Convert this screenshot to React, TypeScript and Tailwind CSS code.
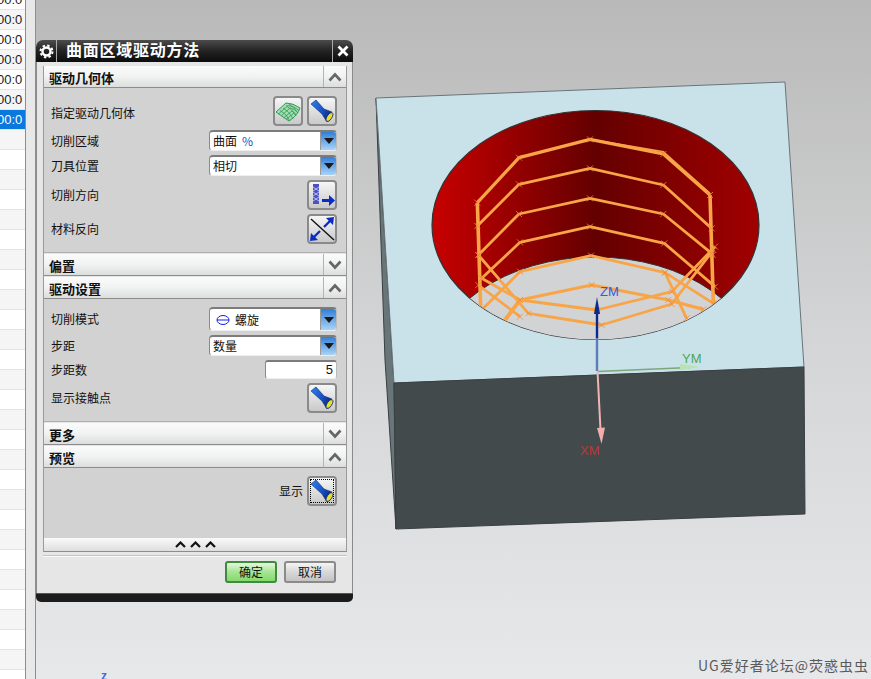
const cjk = "font-['Noto_Sans_CJK_SC','Liberation_Sans',sans-serif]";

const rows = Array.from({ length: 34 }, (_, i) => i);

const toolPaths = [
    [[172, 308], [297, 173], [510, 118], [730, 162], [870, 285]],
    [[172, 378], [297, 253], [510, 205], [730, 255], [875, 385]],
    [[175, 465], [297, 342], [510, 295], [730, 342], [875, 460], [878, 465]],
    [[185, 535], [300, 427], [510, 380], [733, 430], [885, 560]],
    [[190, 625], [300, 515], [513, 467], [735, 518], [880, 610]],
    [[175, 465], [325, 640], [545, 675], [755, 612], [880, 450]],
    [[185, 535], [300, 600], [530, 630], [755, 575], [885, 440]],
    [[300, 600], [515, 555], [745, 600], [850, 628]],
    [[735, 518], [800, 655]],
    [[175, 555], [300, 650]],
];

// zoomed crop coords -> page coords
const pt = ([x, y]: number[]) => [420 + x / 3, 100 + y / 3];
const toPoints = (line: number[][]) => line.map((p) => pt(p).join(',')).join(' ');

function Flashlight() {
    return (
        <svg width="26" height="26" viewBox="0 0 26 26">
            <defs>
                <linearGradient id="torch" x1="0" y1="0" x2="1" y2="0.6">
                    <stop offset="0" stopColor="#2f82ee" />
                    <stop offset="0.55" stopColor="#1a56c8" />
                    <stop offset="1" stopColor="#0a2a86" />
                </linearGradient>
            </defs>
            <path d="M2 6 L7 2 L15 11 L23 14 L18 24 L13 16 Z" fill="url(#torch)" stroke="#0c2a7c" strokeWidth="0.6" />
            <ellipse cx="20.5" cy="19" rx="5" ry="2.4" transform="rotate(-58 20.5 19)" fill="#e8dd2c" stroke="#0c2a7c" strokeWidth="0.8" />
        </svg>
    );
}

function SurfaceIcon() {
    return (
        <svg width="26" height="24" viewBox="0 0 26 24">
            <path d="M1 13 L11 4 Q18 4 25 9 Q23 16 14 22 Z" fill="#a6dcb0" stroke="#2e9a58" strokeWidth="1" />
            <path d="M3.5 15 L13 6.5 Q19 7 24 11.5 M6 17 L15 9 Q20 10 23 14 M8.5 19 L17 12 Q20 13 21 16.5 M11 20.5 L19 14 M5 11.5 Q11 14 15 22 M8 9 Q14 12 18 19.5 M11 6.5 Q17 10 21 17 M14 5 Q19 8 23 14" fill="none" stroke="#2e9a58" strokeWidth="0.8" />
        </svg>
    );
}

function CutDirIcon() {
    return (
        <svg width="26" height="26" viewBox="0 0 26 26">
            <rect x="4" y="2" width="6" height="20" fill="#4a52c0" />
            <path d="M4 5 L10 9 M10 5 L4 9 M4 10 L10 14 M10 10 L4 14 M4 15 L10 19 M10 15 L4 19" stroke="#b8bcec" strokeWidth="1" />
            <path d="M13 17 H20 V13 L26 18.5 L20 24 V20 H13 Z" fill="#0a2cc4" />
        </svg>
    );
}

function FlipIcon() {
    return (
        <svg width="26" height="26" viewBox="0 0 26 26">
            <path d="M2 3 L25 24" stroke="#111" strokeWidth="1.4" />
            <path d="M15 11 L22 4 M11 15 L4 22" stroke="#0a2cc4" strokeWidth="2.4" />
            <path d="M25 1 L24 9 L17 2 Z M1 25 L2 17 L9 24 Z" fill="#0a2cc4" />
        </svg>
    );
}

function Gear() {
    return (
        <svg width="15" height="15" viewBox="0 0 15 15">
            <circle cx="7.5" cy="7.5" r="4" fill="none" stroke="#fff" strokeWidth="2.4" />
            <circle cx="7.5" cy="7.5" r="6" fill="none" stroke="#fff" strokeWidth="2" strokeDasharray="2.4 2.31" />
        </svg>
    );
}

function Chevron({ up }: { up: boolean }) {
    return (
        <svg width="14" height="10" viewBox="0 0 14 10">
            <path d={up ? 'M1.5 8.5 L7 2.5 L12.5 8.5' : 'M1.5 1.5 L7 7.5 L12.5 1.5'} fill="none" stroke="#666" strokeWidth="2.6" />
        </svg>
    );
}

function SectionHeader({ title, up }: { title: string; up: boolean }) {
    return (
        <div className="flex h-[22px] items-stretch border-b border-[#8c8c8c] bg-gradient-to-b from-[#fbfbfb] via-[#f1f2f2] to-[#dcdddd]">
            <span className="flex-1 pl-[5px] text-[13px] font-bold leading-[23px] text-[#111]">{title}</span>
            <span className="flex w-[23px] items-center justify-center border-l border-[#b4b4b4]">
                <Chevron up={up} />
            </span>
        </div>
    );
}

function IconButton({ children, focused }: { children: React.ReactNode; focused?: boolean }) {
    return (
        <div className="relative flex h-[30px] w-[30px] items-center justify-center rounded-[4px] border-2 border-[#8a8a8a] bg-gradient-to-b from-[#f6f6f6] to-[#c9c9c9]">
            {children}
            {focused && <span className="absolute inset-[1px] border border-dotted border-black" />}
        </div>
    );
}

function Dropdown({ children, h }: { children: React.ReactNode; h: string }) {
    return (
        <div className={`flex w-[128px] overflow-hidden rounded-[4px] border-t-2 border-l border-r border-b border-t-[#7c7c7c] border-l-[#8a8a8a] border-r-[#bbb] border-b-[#eee] bg-white ${h}`}>
            <span className="flex flex-1 items-center gap-[5px] pl-[3px] text-[12px] text-[#111]">{children}</span>
            <span className="flex w-[16px] items-center justify-center border-l border-[#9a9a9a] bg-gradient-to-b from-[#2f7fd8] to-[#a9d3f5]">
                <span className="h-0 w-0 border-x-[5px] border-t-[6px] border-x-transparent border-t-[#1a1a1a]" />
            </span>
        </div>
    );
}

function Row({ label, className, labelClass = '', children }: { label: string; className: string; labelClass?: string; children: React.ReactNode }) {
    return (
        <div className={`flex items-center justify-between pl-[7px] pr-[9px] ${className}`}>
            <span className={`text-[12px] text-[#111] ${labelClass}`}>{label}</span>
            {children}
        </div>
    );
}

function Dialog() {
    return (
        <div className={`absolute left-0 top-[40px] w-[317px] ${cjk}`}>
            <div className="flex h-[22px] items-stretch rounded-t-[7px] bg-gradient-to-b from-[#4c4c4c] via-[#232323] to-[#0c0c0c] text-white">
                <span className="flex w-[21px] items-center justify-center border-r border-[#aaa]">
                    <Gear />
                </span>
                <span className="flex-1 pl-[9px] text-[16px] font-bold leading-[18px] tracking-[0.75px]">曲面区域驱动方法</span>
                <span className="flex w-[21px] items-center justify-center border-l border-[#aaa]">
                    <svg width="12" height="12" viewBox="0 0 12 12">
                        <path d="M1.5 1.5 L10.5 10.5 M10.5 1.5 L1.5 10.5" stroke="#fff" strokeWidth="2.8" />
                    </svg>
                </span>
            </div>
            <div className="border-x border-[#8a8a8a] bg-[#e6e6e6] pl-[6px] pr-[5px] pt-[4px]">
                <div className="flex flex-col border-x border-[#9a9a9a]">
                    <SectionHeader title="驱动几何体" up />
                    <div className="flex h-[165px] flex-col border-b border-[#b0b0b0] bg-[#d2d2d2] pt-[8px]">
                        <Row label="指定驱动几何体" className="h-[30px]" labelClass="mt-[4px]">
                            <div className="flex gap-[4px]">
                                <IconButton><SurfaceIcon /></IconButton>
                                <IconButton><Flashlight /></IconButton>
                            </div>
                        </Row>
                        <Row label="切削区域" className="mt-[4px] h-[21px]">
                            <Dropdown h="h-[21px]">曲面 <span className="text-[#1b4fb4]">%</span></Dropdown>
                        </Row>
                        <Row label="刀具位置" className="mt-[4px] h-[21px]">
                            <Dropdown h="h-[21px]">相切</Dropdown>
                        </Row>
                        <Row label="切削方向" className="mt-[4px] h-[30px]">
                            <IconButton><CutDirIcon /></IconButton>
                        </Row>
                        <Row label="材料反向" className="mt-[4px] h-[30px]">
                            <IconButton><FlipIcon /></IconButton>
                        </Row>
                    </div>
                    <div className="mt-[1px]"><SectionHeader title="偏置" up={false} /></div>
                    <div className="mt-[1px]"><SectionHeader title="驱动设置" up /></div>
                    <div className="flex h-[123px] flex-col border-b border-[#b0b0b0] bg-[#d2d2d2] pt-[8px]">
                        <Row label="切削模式" className="h-[24px]">
                            <Dropdown h="h-[24px]">
                                <svg width="14" height="12" viewBox="0 0 14 12" className="ml-[3px]">
                                    <ellipse cx="7" cy="6" rx="6" ry="4.5" fill="none" stroke="#1420e0" strokeWidth="1" />
                                    <path d="M1 6 H13" stroke="#1420e0" strokeWidth="1" />
                                </svg>
                                螺旋
                            </Dropdown>
                        </Row>
                        <Row label="步距" className="mt-[4px] h-[21px]">
                            <Dropdown h="h-[21px]">数量</Dropdown>
                        </Row>
                        <Row label="步距数" className="mt-[4px] h-[19px]">
                            <div className="flex h-[19px] w-[72px] items-center justify-end rounded-[3px] border-t-2 border-l border-r border-b border-t-[#7c7c7c] border-l-[#8a8a8a] border-r-[#bbb] border-b-[#eee] bg-white pr-[3px] font-['Liberation_Sans',sans-serif] text-[13px] text-[#111]">5</div>
                        </Row>
                        <Row label="显示接触点" className="mt-[4px] h-[30px]">
                            <IconButton><Flashlight /></IconButton>
                        </Row>
                    </div>
                    <div className="mt-[1px]"><SectionHeader title="更多" up={false} /></div>
                    <div className="mt-[1px]"><SectionHeader title="预览" up /></div>
                    <div className="flex h-[70px] items-start justify-end gap-[4px] bg-[#d2d2d2] pr-[9px] pt-[8px]">
                        <span className="text-[12px] leading-[30px] text-[#111]">显示</span>
                        <IconButton focused><Flashlight /></IconButton>
                    </div>
                    <div className="flex h-[14px] items-center justify-center gap-[4px] border-b border-[#8c8c8c] bg-gradient-to-b from-[#fafafa] to-[#dedede]">
                        {[0, 1, 2].map((i) => (
                            <svg key={i} width="11" height="7" viewBox="0 0 11 7">
                                <path d="M1 6 L5.5 1.5 L10 6" fill="none" stroke="#111" strokeWidth="2.2" />
                            </svg>
                        ))}
                    </div>
                </div>
                <div className="mt-[3px] h-[2px] border-b border-[#fafafa] bg-[#c4c4c4]" />
                <div className="flex h-[36px] items-start justify-end gap-[7px] pr-[11px] pt-[4px]">
                    <button className="h-[22px] w-[52px] rounded-[3px] border-2 border-[#3f8a3f] bg-gradient-to-b from-[#e4f7de] via-[#a5e58f] to-[#86d870] text-[12px] leading-[18px] text-[#111]">确定</button>
                    <button className="h-[22px] w-[52px] rounded-[3px] border-2 border-[#8a8a8a] bg-gradient-to-b from-[#f4f4f4] via-[#d8d8d8] to-[#c4c4c4] text-[12px] leading-[18px] text-[#111]">取消</button>
                </div>
            </div>
            <div className="h-[9px] rounded-b-[5px] border-t border-[#555] bg-[#1c1c1c]" />
        </div>
    );
}

function Model() {
    return (
        <svg className="absolute left-0 top-0" width="835" height="679" viewBox="36 0 835 679">
            <defs>
                <linearGradient id="wall" gradientUnits="userSpaceOnUse" x1="432" y1="0" x2="759" y2="0">
                    <stop offset="0" stopColor="#c80000" />
                    <stop offset="0.5" stopColor="#640000" />
                    <stop offset="1" stopColor="#a20000" />
                </linearGradient>
                <clipPath id="hole">
                    <ellipse cx="595.5" cy="225" rx="163.5" ry="114.5" />
                </clipPath>
            </defs>
            <polygon points="376,98 385,360 396,529 394,383" fill="#68767a" stroke="#3a4042" strokeWidth="1" />
            <polygon points="376,98 785,82 804,367 394,383" fill="#c9e2ea" stroke="#6a7478" strokeWidth="1" />
            <polygon points="394,383 804,367 805,514 396,529" fill="#434a4c" stroke="#3a4042" strokeWidth="1" />
            <ellipse cx="595.5" cy="225" rx="163.5" ry="114.5" fill="url(#wall)" stroke="#333" strokeWidth="1.2" />
            <g clipPath="url(#hole)">
                <ellipse cx="595.5" cy="372" rx="164" ry="115" fill="#d2d3d5" stroke="#333" strokeWidth="1" />
                {toolPaths.map((line, i) => (
                    <polyline key={i} points={toPoints(line)} fill="none" stroke="#f8a548" strokeWidth={i === 0 || i === 7 ? 3.2 : 2.8} strokeLinejoin="round" />
                ))}
                <polyline points={toPoints([[172, 308], [182, 620]])} fill="none" stroke="#f8a548" strokeWidth="3.6" />
                <polyline points={toPoints([[870, 285], [880, 610]])} fill="none" stroke="#f8a548" strokeWidth="3.6" />
                <polyline points={toPoints([[255, 660], [300, 600]])} fill="none" stroke="#f8a548" strokeWidth="4" />
                <polyline points={toPoints([[510, 118], [730, 155], [870, 280]])} fill="none" stroke="#f8a548" strokeWidth="1.6" />
                {toolPaths.flat().map((p, i) => {
                    const [x, y] = pt(p);
                    return (
                        <path key={i} d={`M${x - 3} ${y - 3} L${x + 3} ${y + 3} M${x + 3} ${y - 3} L${x - 3} ${y + 3}`} stroke="#ee8f3c" strokeWidth="0.8" />
                    );
                })}
            </g>
            <path d="M597 371 V338" stroke="#5e7cb8" strokeWidth="2.4" />
            <path d="M597 338 V312" stroke="#0b2a8c" strokeWidth="2.4" />
            <path d="M597 297 L600 314 L594 314 Z" fill="#0b2a8c" />
            <path d="M597 371.5 L690 367.5" stroke="#7da67c" strokeWidth="1.4" />
            <path d="M700 367 L680 364 L680 370 Z" fill="#b8e2b0" />
            <path d="M597.5 371 L600.5 430" stroke="#f0b4b4" strokeWidth="2" />
            <path d="M601.5 444 L597 428 L605 427.5 Z" fill="#f0aeae" />
            <text x="600" y="296" fontSize="13" fill="#2a60e6" fontFamily="Liberation Sans">ZM</text>
            <text x="682" y="363" fontSize="13" fill="#4ea653" fontFamily="Liberation Sans">YM</text>
            <text x="580" y="455" fontSize="13" fill="#b83a3a" fontFamily="Liberation Sans">XM</text>
        </svg>
    );
}

export default function App() {
    return (
        <div className="flex h-[679px] w-[871px] overflow-hidden bg-white">
            <div className="flex w-[26px] shrink-0 flex-col overflow-hidden border-r border-[#8e8e8e]">
                {rows.map((i) => {
                    const selected = i === 6;
                    const hasTime = i < 7;
                    return (
                        <div
                            key={i}
                            className={`h-[20px] shrink-0 overflow-hidden whitespace-nowrap border-b border-[#e4e4e4] font-['Liberation_Sans',sans-serif] text-[13px] leading-[19px] ${selected ? 'bg-[#0a78dc] text-white' : i % 2 === 0 ? 'bg-white text-[#222]' : 'bg-[#f5f5f5] text-[#222]'} ${i === 0 ? 'mt-[-10px]' : ''}`}
                        >
                            {hasTime && <span className="ml-[-3px]">00:0</span>}
                        </div>
                    );
                })}
            </div>
            <div className="w-[10px] shrink-0 border-r border-[#8e8e8e] bg-[#e8e8e8]" />
            <div className="relative flex-1 bg-gradient-to-b from-[#b9b9b9] via-[#d4d5d6] to-[#e7e8ea]">
                <Model />
                <Dialog />
                <span className="absolute bottom-[-6px] left-[65px] font-['Liberation_Sans',sans-serif] text-[12px] font-bold text-[#3c6ee6]">z</span>
                <span className={`absolute bottom-[3px] right-[2px] text-[14px] tracking-[1px] text-[#5a5a5a] ${cjk}`}>UG爱好者论坛@荧惑虫虫</span>
            </div>
        </div>
    );
}
